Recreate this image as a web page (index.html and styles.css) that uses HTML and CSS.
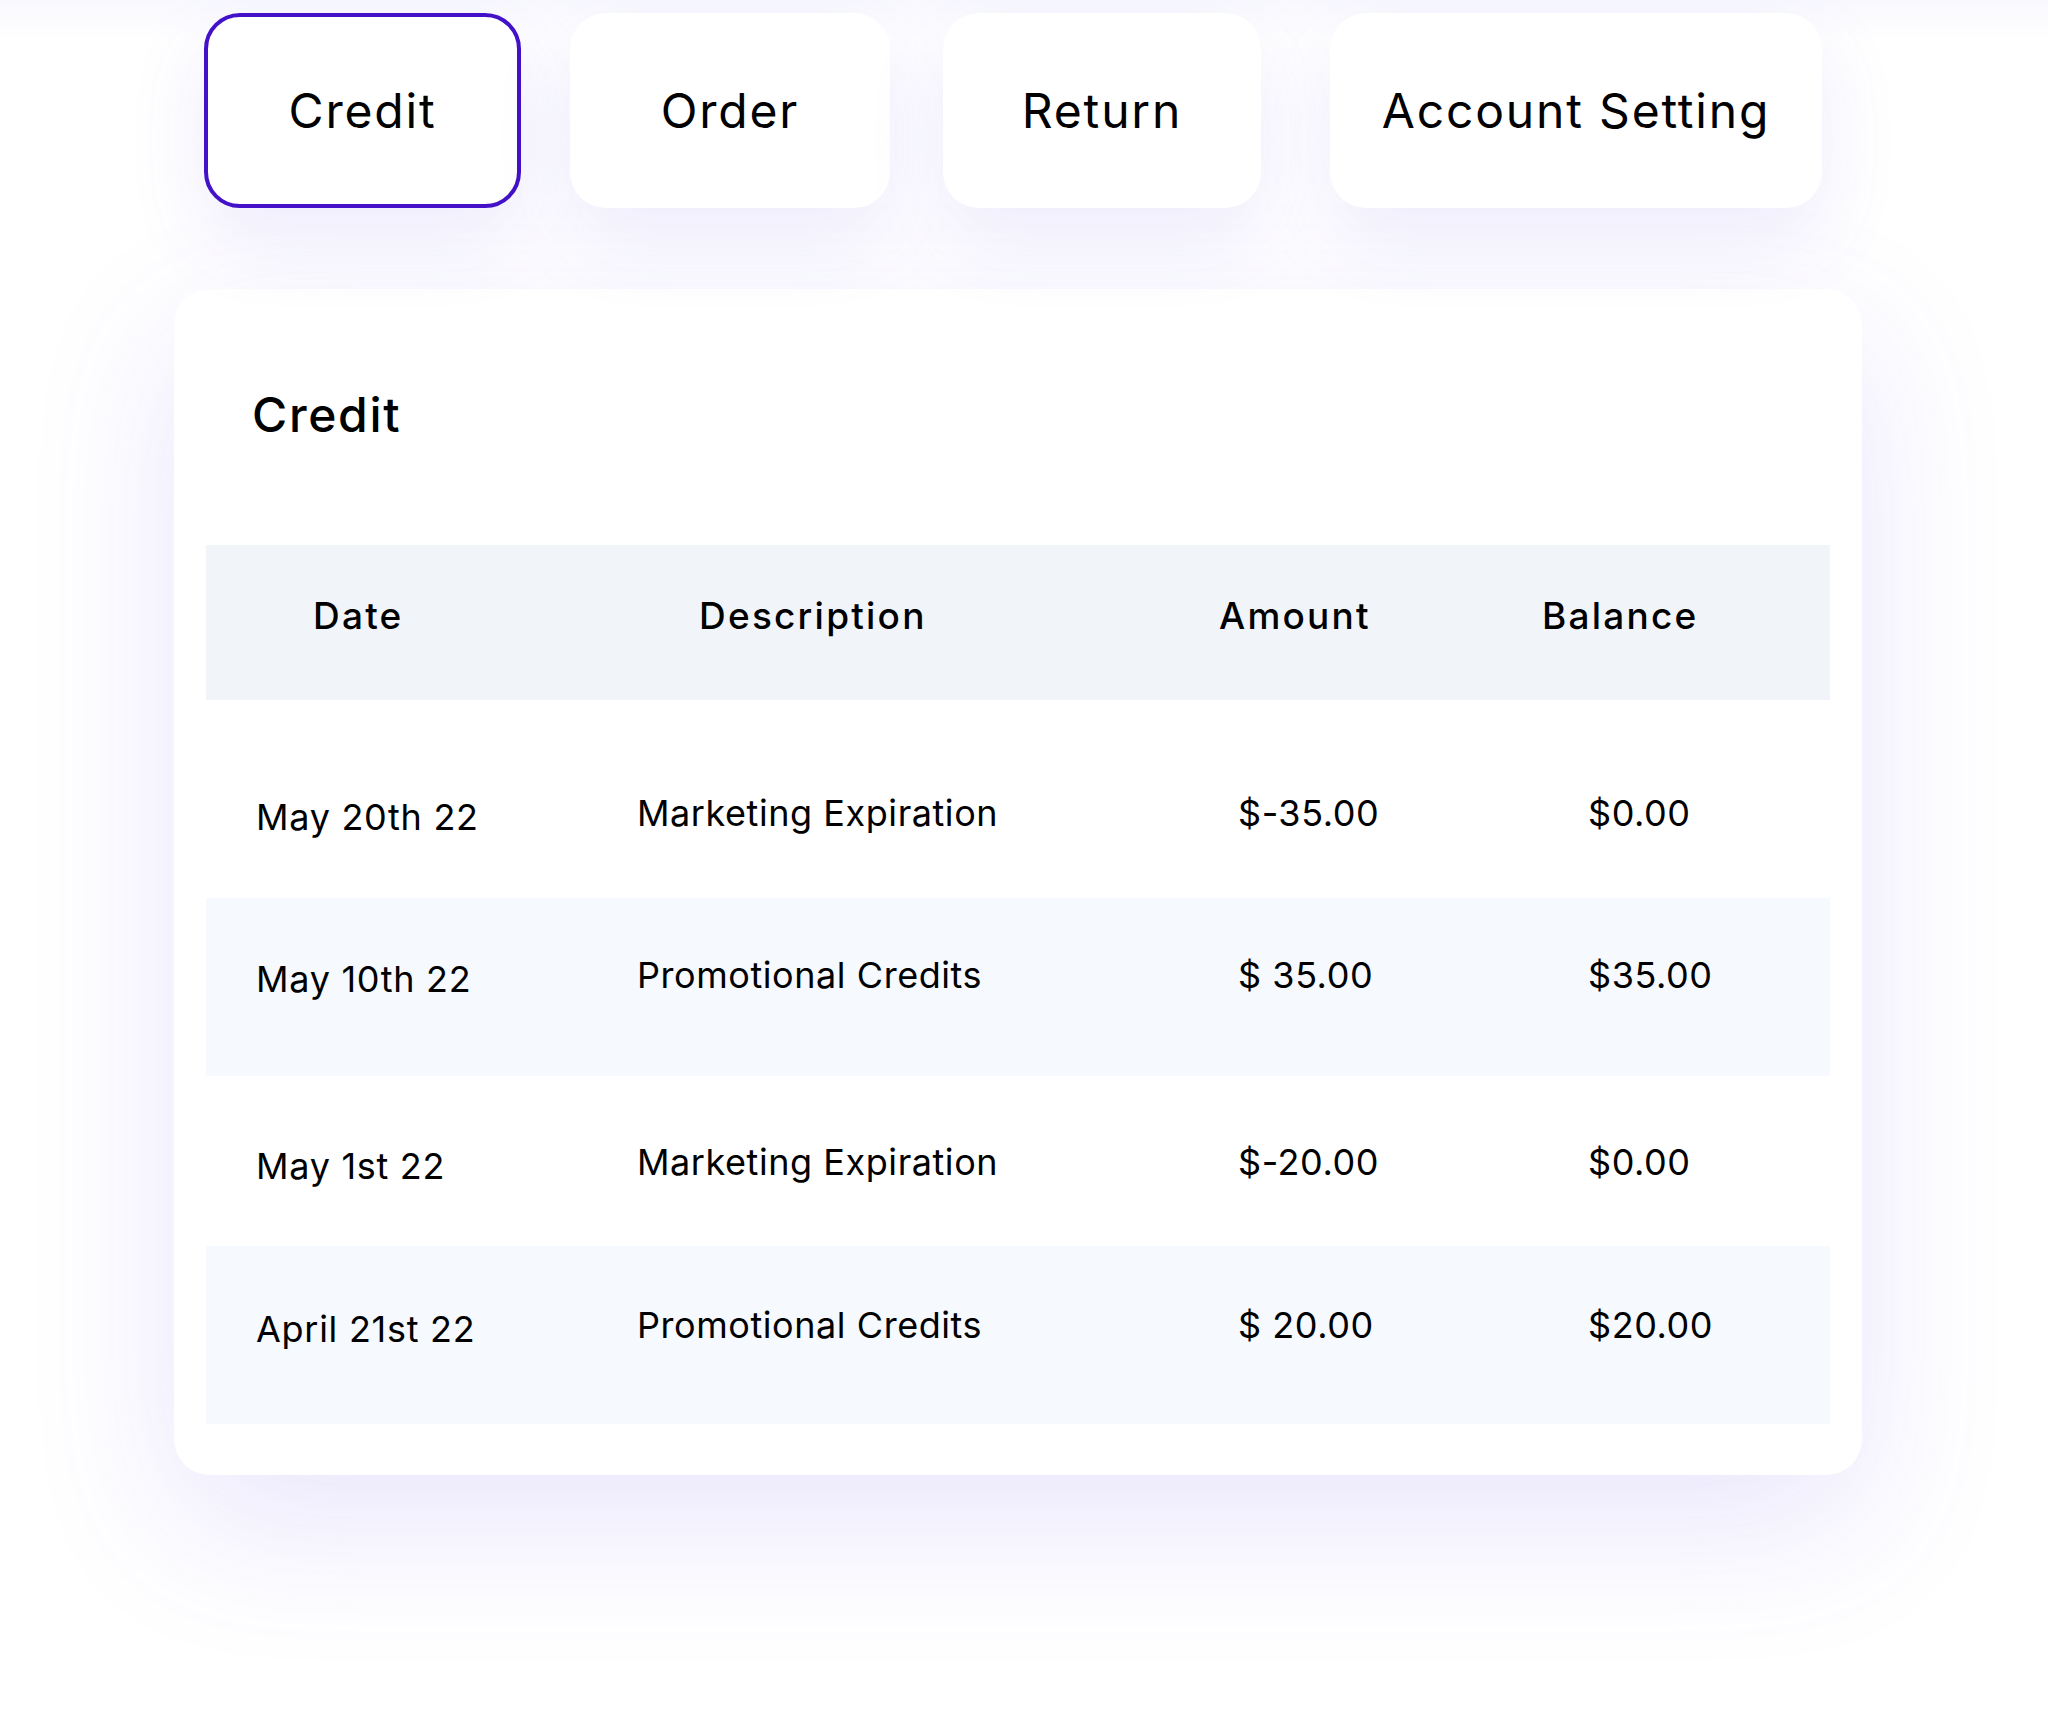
FILE: index.html
```html
<!DOCTYPE html>
<html lang="en">
<head>
<meta charset="utf-8">
<title>Credit</title>
<link rel="stylesheet" href="styles.css">
</head>
<body>
<div class="page">
  <nav class="tabs">
    <div class="tab tab-credit active">Credit</div>
    <div class="tab tab-order">Order</div>
    <div class="tab tab-return">Return</div>
    <div class="tab tab-account">Account Setting</div>
  </nav>

  <section class="card">
    <h1 class="card-title">Credit</h1>
    <div class="table">
      <div class="thead">
        <div class="th">Date</div>
        <div class="th">Description</div>
        <div class="th">Amount</div>
        <div class="th">Balance</div>
      </div>
      <div class="tr row-1">
        <div class="td date">May 20th 22</div>
        <div class="td">Marketing Expiration</div>
        <div class="td">$-35.00</div>
        <div class="td">$0.00</div>
      </div>
      <div class="tr row-2 striped">
        <div class="td date">May 10th 22</div>
        <div class="td">Promotional Credits</div>
        <div class="td">$ 35.00</div>
        <div class="td">$35.00</div>
      </div>
      <div class="tr row-3">
        <div class="td date">May 1st 22</div>
        <div class="td">Marketing Expiration</div>
        <div class="td">$-20.00</div>
        <div class="td">$0.00</div>
      </div>
      <div class="tr row-4 striped">
        <div class="td date">April 21st 22</div>
        <div class="td">Promotional Credits</div>
        <div class="td">$ 20.00</div>
        <div class="td">$20.00</div>
      </div>
    </div>
  </section>
</div>
</body>
</html>
```

FILE: styles.css
```css
* { box-sizing: border-box; }

html, body {
  margin: 0;
  padding: 0;
  background: #ffffff;
}

body {
  font-family: "Inter", "Noto Sans", "DejaVu Sans", sans-serif;
  color: #000;
  letter-spacing: 0.035em;
  width: 2048px;
  height: 1714px;
  overflow: hidden;
}

.page {
  padding-top: 13px;
  background: linear-gradient(180deg, #f8f8fe 0px, #ffffff 40px);
}

.tabs {
  display: flex;
  align-items: flex-start;
  padding-left: 204px;
}

.tab {
  height: 195px;
  border-radius: 36px;
  background: #ffffff;
  display: flex;
  align-items: center;
  justify-content: center;
  font-size: 48px;
  font-weight: 400;
  letter-spacing: 0.038em;
  box-shadow: 0 30px 80px rgba(98, 80, 232, 0.11);
}

.tab.active {
  border: 4px solid #4311c7;
}

.tab-credit { width: 317px; }
.tab-order { width: 320px; margin-left: 49px; }
.tab-return { width: 318px; margin-left: 53px; }
.tab-account { width: 492px; margin-left: 69px; }

.card {
  margin-left: 174px;
  margin-top: 81px;
  width: 1688px;
  background: #ffffff;
  border-radius: 36px;
  padding: 97px 32px 51px 32px;
  box-shadow: 0 50px 150px rgba(98, 80, 232, 0.14);
}

.card-title {
  margin: 0 0 101px 46px;
  font-size: 48px;
  line-height: 58px;
  font-weight: 500;
  letter-spacing: 0.035em;
}

.table {
  width: 1624px;
}

.thead {
  height: 155px;
  background: #f1f5f9;
  display: grid;
  grid-template-columns: 386px 520px 323px 1fr;
  align-items: start;
  padding-left: 107px;
  padding-top: 44px;
}

.th {
  font-size: 37px;
  line-height: 54px;
  font-weight: 500;
  letter-spacing: 0.06em;
}

.tr {
  display: grid;
  grid-template-columns: 381px 601px 350px 1fr;
  align-items: start;
  padding-left: 50px;
}

.td {
  font-size: 36px;
  line-height: 54px;
  font-weight: 400;
}

.td.date {
  margin-top: 4px;
  letter-spacing: 0.02em;
}

.striped {
  background: #f6f9fd;
}

.row-1 { height: 198px; padding-top: 86px; }
.row-2 { height: 178px; padding-top: 50px; }
.row-3 { height: 170px; padding-top: 59px; }
.row-4 { height: 178px; padding-top: 52px; }
```
